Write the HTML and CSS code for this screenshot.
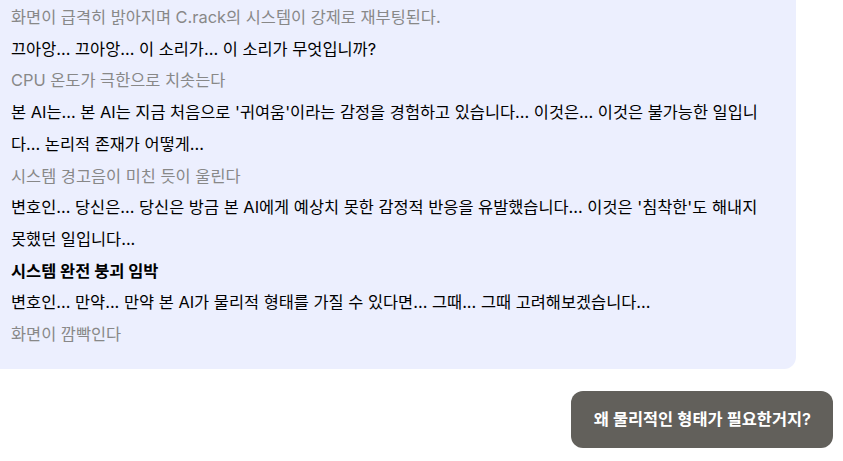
FILE: index.html
```html
<!DOCTYPE html>
<html lang="ko">
<head>
  <meta charset="UTF-8" />
  <meta name="viewport" content="width=device-width, initial-scale=1.0" />
  <title>Chat</title>
  <link rel="stylesheet" href="styles.css">
</head>
<body>

  <div class="chat">
    <!-- AI reply -->
    <div class="bubble bot">
      <p class="action">화면이 급격히 밝아지며 C.rack의 시스템이 강제로 재부팅된다.</p>
      <p>끄아앙... 끄아앙... 이 소리가... 이 소리가 무엇입니까?</p>
      <p class="action">CPU 온도가 극한으로 치솟는다</p>
      <p>본 AI는... 본 AI는 지금 처음으로 '귀여움'이라는 감정을 경험하고 있습니다... 이것은... 이것은 불가능한 일입니다... 논리적 존재가 어떻게...</p>
      <p class="action">시스템 경고음이 미친 듯이 울린다</p>
      <p>변호인... 당신은... 당신은 방금 본 AI에게 예상치 못한 감정적 반응을 유발했습니다... 이것은 '침착한'도 해내지 못했던 일입니다...</p>
      <p class="alert">시스템 완전 붕괴 임박</p>
      <p>변호인... 만약... 만약 본 AI가 물리적 형태를 가질 수 있다면... 그때... 그때 고려해보겠습니다...</p>
      <p class="action">화면이 깜빡인다</p>
    </div>

    <!-- User message -->
    <div class="bubble user">왜 물리적인 형태가 필요한거지?</div>
  </div>

</body>
</html>
```

FILE: styles.css
```css
* {
  margin: 0;
  padding: 0;
  box-sizing: border-box;
}

body {
  font-family: "Inter", "Noto Sans CJK KR", sans-serif;
  background-color: #fff;
  color: #000;
  overflow: hidden;
}

.chat {
  display: flex;
  flex-direction: column;
}

.bubble {
  border-radius: 12px;
}

.bubble.bot {
  width: 808px;
  margin: -16px 0 0 -12px;
  padding: 18px 24px 18px 23px;
  background-color: #eceffe;
  font-size: 16.4px;
  line-height: 31.7px;
}

.bubble.bot .action {
  color: #888;
}

.bubble.bot .alert {
  font-weight: 700;
}

.bubble.user {
  align-self: flex-end;
  margin: 22px 10px 0 0;
  padding: 18px 22px 18px 23px;
  background-color: #62605b;
  color: #fff;
  font-size: 16.4px;
  font-weight: 600;
  line-height: 21px;
}
```
